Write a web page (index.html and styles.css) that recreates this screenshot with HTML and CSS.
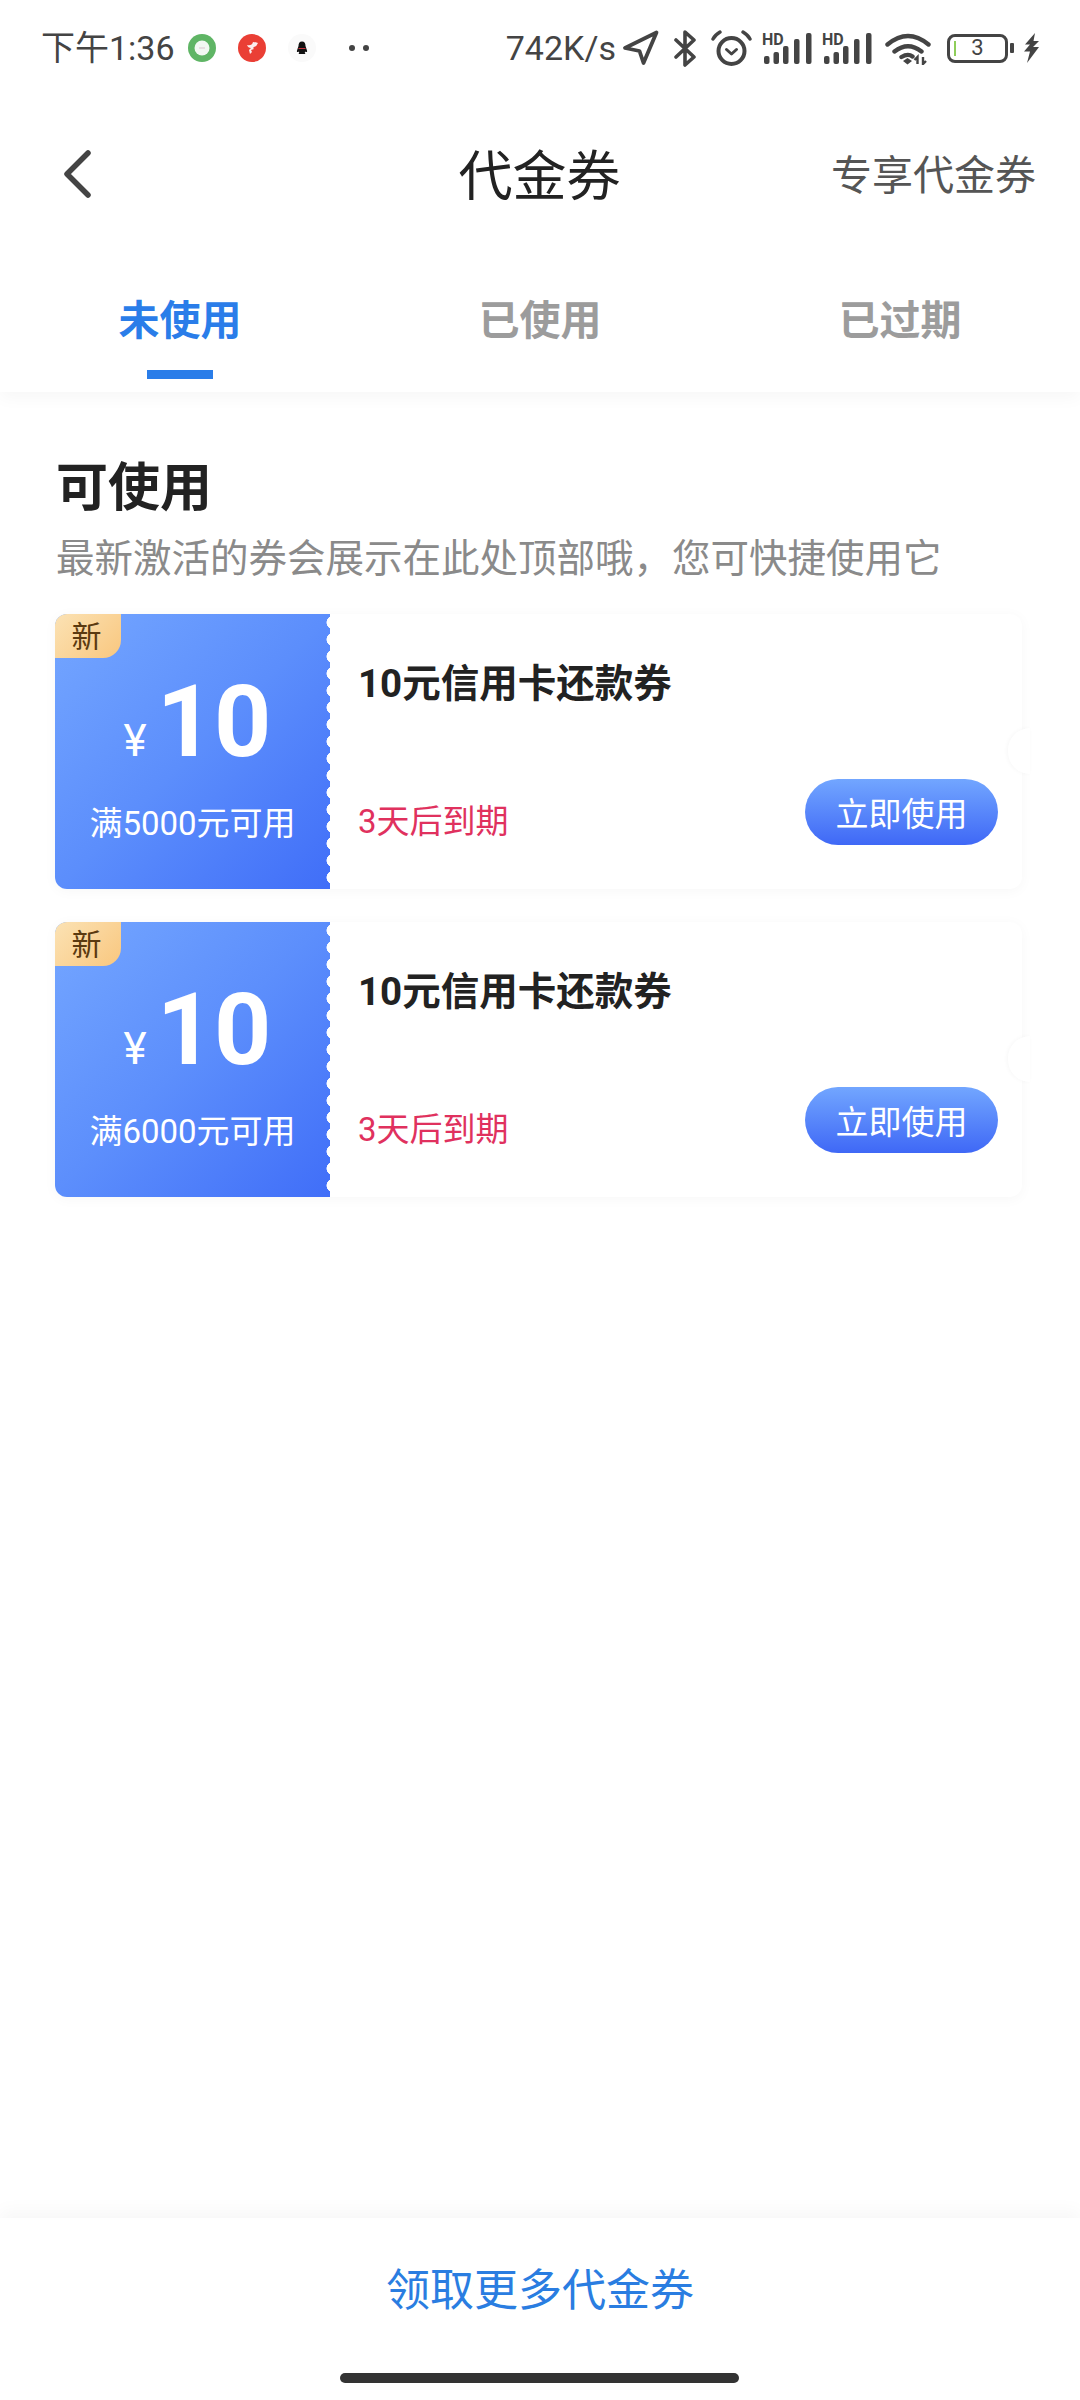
FILE: index.html
```html
<!DOCTYPE html>
<html lang="zh-CN">
<head>
<meta charset="utf-8">
<title>代金券</title>
<link rel="stylesheet" href="styles.css">
</head>
<body>
<div class="page">
  <header class="top">
    <div class="status">
      <div class="status-left">
        <span class="status-text">下午1:36</span>
        <svg class="app first" viewBox="0 0 28 28"><circle cx="14" cy="14" r="14" fill="#5fb565"/><circle cx="14" cy="14" r="7.500" fill="#f2f8f2"/><path d="M11 14h6" stroke="#dcc4d0" stroke-width="1"/></svg>
        <svg class="app" viewBox="0 0 28 28"><circle cx="14" cy="14" r="14" fill="#ea3f35"/><path d="M9 11q5 1 6-3 2 0 5 1-1 3-4 4l-1 1 1 1-3 1 1 2-2 2-1-4 2-2q-3 0-4-3z" fill="#fbeeee"/></svg>
        <svg class="app" viewBox="0 0 28 28"><circle cx="14" cy="14" r="14" fill="#fafafa"/><path d="M14 7.500c-2.600 0-3.500 2-3.500 4.500L9 16.500c-.500 1.500.500 2 1.500 1l.800 1.200-.800 1.300h7l-.800-1.300.800-1.200c1 1 2 .500 1.500-1L17.500 12c0-2.500-.900-4.500-3.500-4.500z" fill="#111"/><path d="M10.500 14.500h7" stroke="#c8323c" stroke-width="1"/></svg>
        <svg class="dots" viewBox="0 0 20 8"><circle cx="3" cy="4" r="3" fill="#444"/><circle cx="17" cy="4" r="3" fill="#444"/></svg>
      </div>
      <div class="status-right">
        <span class="status-text speed">742K/s</span>
        <svg class="ic-nav" viewBox="0 0 37 36"><path d="M34.500 2.500L3 18l14.500 3 4 12z" fill="none" stroke="#444" stroke-width="3.800" stroke-linejoin="round"/></svg>
        <svg class="ic-bt" viewBox="0 0 24 37"><path d="M3 10l18 17-9 8V2l9 8L3 27" fill="none" stroke="#444" stroke-width="3.600" stroke-linecap="round" stroke-linejoin="round"/></svg>
        <svg class="ic-alarm" viewBox="0 0 41 36"><circle cx="20.500" cy="21" r="13" fill="none" stroke="#444" stroke-width="4"/><path d="M15.500 19.500l5 4.500 5-4.500" fill="none" stroke="#444" stroke-width="3" stroke-linecap="round" stroke-linejoin="round"/><path d="M2 9q2-4 7-7M39 9q-2-4-7-7" fill="none" stroke="#444" stroke-width="3.400" stroke-linecap="round"/></svg>
        <svg class="ic-sig" viewBox="0 -4 50 36"><text class="hd" x="0" y="13">HD</text><g fill="#444"><rect x="2" y="24" width="5.500" height="8" rx="2"/><rect x="11.500" y="20" width="5.500" height="12" rx="2"/><rect x="21" y="14" width="5.500" height="18" rx="2"/><rect x="32" y="7" width="5.500" height="25" rx="2"/><rect x="44" y="1" width="5.500" height="31" rx="2"/></g></svg>
        <svg class="ic-sig second" viewBox="0 -4 50 36"><text class="hd" x="0" y="13">HD</text><g fill="#444"><rect x="2" y="24" width="5.500" height="8" rx="2"/><rect x="11.500" y="20" width="5.500" height="12" rx="2"/><rect x="21" y="14" width="5.500" height="18" rx="2"/><rect x="32" y="7" width="5.500" height="25" rx="2"/><rect x="44" y="1" width="5.500" height="31" rx="2"/></g></svg>
        <svg class="ic-wifi" viewBox="0 0 46 33"><path d="M2.500 12.500q20.500-17 41 0M9.500 19.500q13.500-10.500 27 0M16.500 25q6.500-4 11 -.5" fill="none" stroke="#444" stroke-width="4.400" stroke-linecap="round"/><path d="M18 29l4.500-3 4.500 3-4.500 3.500z" fill="#444"/><path d="M32.500 32v-7l-3 3M38 25v7l3-3" fill="none" stroke="#444" stroke-width="2.400"/></svg>
        <div class="battery">
          <div class="battery-body"><span class="battery-level"></span><span class="battery-num">3</span></div>
          <span class="battery-nub"></span>
        </div>
        <svg class="ic-bolt" viewBox="0 0 17 30"><path d="M12 0L2 11.500h5L1 18.500h6L4 30l12-16h-6l6-6h-5.500z" fill="#444"/></svg>
      </div>
    </div>
    <nav class="nav">
      <div class="nav-left">
        <svg class="back" viewBox="0 0 28 48"><path d="M25 3L4 24l21 21" fill="none" stroke="#444" stroke-width="5.500" stroke-linecap="round" stroke-linejoin="round"/></svg>
      </div>
      <h1 class="title">代金券</h1>
      <a class="nav-link">专享代金券</a>
    </nav>
    <div class="tabs">
      <div class="tab active"><span class="tab-label">未使用</span><span class="tab-bar"></span></div>
      <div class="tab"><span class="tab-label">已使用</span><span class="tab-bar"></span></div>
      <div class="tab"><span class="tab-label">已过期</span><span class="tab-bar"></span></div>
    </div>
  </header>

  <main class="main">
    <h2 class="heading">可使用</h2>
    <p class="sub">最新激活的券会展示在此处顶部哦，您可快捷使用它</p>
    <div class="cards">
      <article class="card">
        <div class="face">
          <span class="badge">新</span>
          <div class="amount"><span class="yen">¥</span><span class="value">10</span></div>
          <div class="limit">满5000元可用</div>
        </div>
        <div class="info">
          <div class="name">10元信用卡还款券</div>
          <div class="row">
            <span class="expire">3天后到期</span>
            <button class="use">立即使用</button>
          </div>
        </div>
        <span class="notch"></span>
      </article>
      <article class="card">
        <div class="face">
          <span class="badge">新</span>
          <div class="amount"><span class="yen">¥</span><span class="value">10</span></div>
          <div class="limit">满6000元可用</div>
        </div>
        <div class="info">
          <div class="name">10元信用卡还款券</div>
          <div class="row">
            <span class="expire">3天后到期</span>
            <button class="use">立即使用</button>
          </div>
        </div>
        <span class="notch"></span>
      </article>
    </div>
  </main>

  <footer class="footer">
    <a class="more">领取更多代金券</a>
    <span class="home"></span>
  </footer>
</div>
</body>
</html>
```
FILE: styles.css
```css
* { box-sizing: border-box; }
html, body { margin: 0; padding: 0; background: #fff; }
body { font-family: Roboto, "Noto Sans CJK SC", sans-serif; color: #222; }
h1, h2, p { margin: 0; font-weight: normal; }

.page { width: 1080px; height: 2400px; display: flex; flex-direction: column; overflow: hidden; background: #fff; }

.top { position: relative; z-index: 2; background: #fff; box-shadow: 0 6px 16px rgba(0, 0, 0, 0.035); }

.status { height: 96px; padding: 0 40px 0 41px; display: flex; align-items: center; justify-content: space-between; }
.status-left, .status-right { display: flex; align-items: center; }
.status-text { font-size: 34px; line-height: 40px; color: #444; white-space: nowrap; }
.speed { margin-right: 1px; }
.app { width: 28px; height: 28px; margin-left: 22px; }
.app.first { margin-left: 13px; }
.dots { width: 20px; height: 8px; margin-left: 33px; }

.ic-nav { width: 37px; height: 36px; margin-left: 5px; }
.ic-bt { width: 24px; height: 37px; margin-left: 14px; }
.ic-alarm { width: 41px; height: 36px; margin-left: 14px; }
.ic-sig { width: 50px; height: 36px; margin: 0 0 4px 10px; }
.ic-wifi { width: 46px; height: 33px; margin-left: 13px; }
.ic-bolt { width: 17px; height: 30px; margin-left: 9px; }
.hd { font-family: Roboto, sans-serif; font-size: 16px; font-weight: 700; fill: #444; }

.battery { display: flex; align-items: center; margin-left: 16px; }
.battery-body { position: relative; width: 61px; height: 29px; border: 3.500px solid #444; border-radius: 8px; display: flex; align-items: center; justify-content: center; }
.battery-level { position: absolute; left: 3.500px; top: 4px; width: 2px; height: 15px; background: #8fce5a; }
.battery-num { font-size: 22px; line-height: 22px; color: #444; }
.battery-nub { width: 4px; height: 10px; margin-left: 2px; background: #444; border-radius: 1px; }

.nav { height: 158px; padding: 0 44px 0 63px; display: grid; grid-template-columns: 1fr auto 1fr; align-items: center; }
.nav-left { display: flex; align-items: center; margin-top: -3px; }
.back { width: 28px; height: 48px; }
.title { font-size: 54px; line-height: 64px; color: #222; margin: 5px 0 0 -20px; }
.nav-link { justify-self: end; margin-top: 2px; font-size: 41px; line-height: 50px; color: #555; white-space: nowrap; }

.tabs { height: 138px; display: grid; grid-template-columns: repeat(3, 1fr); }
.tab { display: flex; flex-direction: column; align-items: center; padding-top: 47px; }
.tab-label { font-size: 41px; line-height: 40px; font-weight: 700; color: #9c9c9c; }
.tab-bar { width: 66px; height: 9px; margin-top: 29px; }
.tab.active .tab-label { color: #2a7de9; }
.tab.active .tab-bar { background: #2a7de9; }

.main { flex: 1; padding: 67px 58px 0 55px; }
.heading { font-size: 52px; line-height: 60px; font-weight: 700; color: #222; margin-left: 1px; }
.sub { margin: 17px 0 32px 1px; font-size: 38.500px; line-height: 46px; color: #8a8a8a; white-space: nowrap; }

.cards { display: flex; flex-direction: column; gap: 33px; }
.card { position: relative; height: 275px; display: flex; background: #fff; border-radius: 12px; box-shadow: 0 2px 14px rgba(0, 0, 0, 0.035); }

.face { position: relative; width: 275px; flex: none; padding-top: 58px; border-radius: 12px 0 0 12px; background: linear-gradient(135deg, #74a6ff 0%, #5c8efc 50%, #406ef8 100%); color: #fff; display: flex; flex-direction: column; align-items: center; }
.face::after { content: ""; position: absolute; top: 0; right: -5px; width: 10px; height: 100%; background: radial-gradient(circle at 8px 8.500px, #fff 6.200px, rgba(255, 255, 255, 0) 6.800px) 0 0 / 10px 17px repeat-y; }
.badge { position: absolute; left: 0; top: 0; width: 66px; height: 44px; padding-right: 3px; border-radius: 12px 0 18px 0; background: linear-gradient(135deg, #fbe2b4 0%, #f9c77f 100%); color: #5b3a10; font-size: 30px; line-height: 45px; text-align: center; }
.amount { display: flex; align-items: baseline; height: 100px; padding-left: 10px; }
.yen { font-size: 44px; line-height: 100px; margin-right: 10px; }
.value { font-size: 100px; line-height: 100px; font-weight: 700; }
.limit { margin-top: 29px; font-size: 33px; line-height: 46px; white-space: nowrap; }

.info { flex: 1; display: flex; flex-direction: column; padding: 47px 24px 44px 28px; }
.name { font-size: 38.500px; line-height: 46px; font-weight: 700; color: #222; white-space: nowrap; }
.row { margin-top: auto; display: flex; justify-content: space-between; align-items: flex-end; }
.expire { font-size: 33px; line-height: 46px; color: #e0315e; white-space: nowrap; }
.use { width: 193px; height: 66px; padding: 0; border: 0; border-radius: 33px; background: linear-gradient(180deg, #72a6ff 0%, #3f68f6 100%); color: #fff; font-family: inherit; font-size: 33px; }

.notch { position: absolute; right: -8px; top: 114px; width: 22px; height: 46px; border-radius: 23px 0 0 23px; background: #fff; box-shadow: -1px 0 4px rgba(0, 0, 0, 0.035); }

.footer { position: relative; z-index: 2; height: 182px; padding-top: 43px; background: #fff; box-shadow: 0 -8px 16px rgba(0, 0, 0, 0.03); display: flex; flex-direction: column; align-items: center; }
.more { font-size: 44px; line-height: 60px; color: #2a7de1; white-space: nowrap; }
.home { width: 399px; height: 10px; margin: 52px 2px 0 0; border-radius: 5px; background: #333; }
```
